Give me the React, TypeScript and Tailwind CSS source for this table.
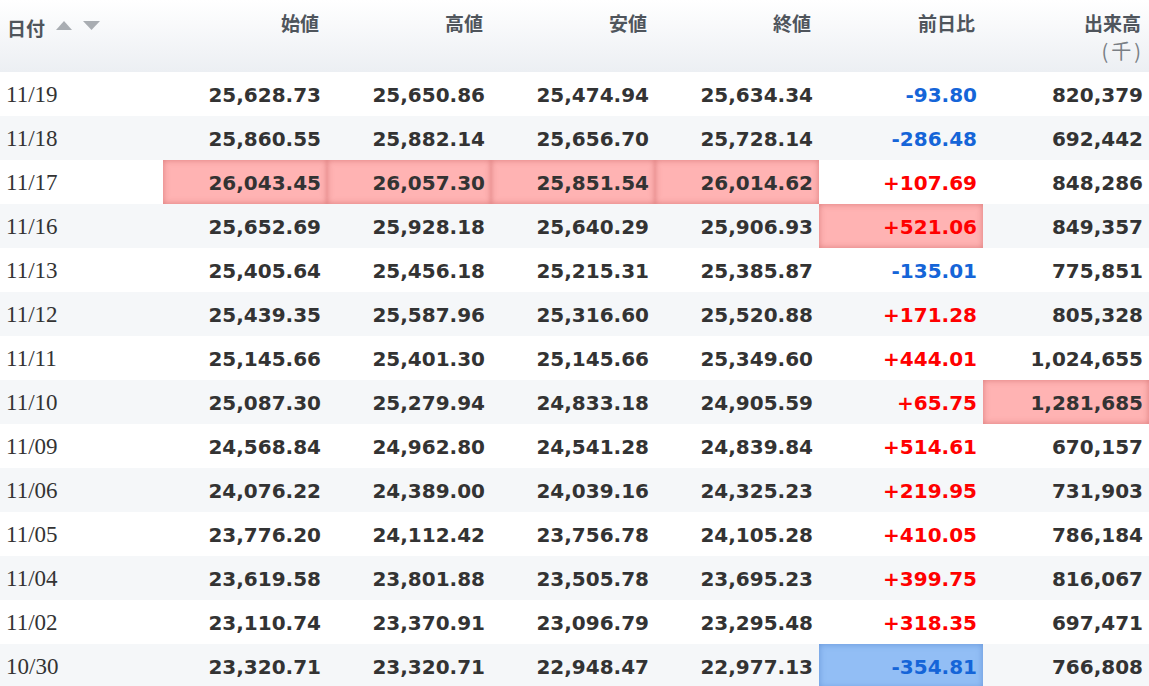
import React from "react";

type Mark = "up" | "down" | undefined;

interface Row {
  date: string;
  open: string;
  high: string;
  low: string;
  close: string;
  diff: string;
  vol: string;
  // which cells get the highlight tint
  hl?: { open?: Mark; high?: Mark; low?: Mark; close?: Mark; diff?: Mark; vol?: Mark };
}

const rows: Row[] = [
  { date: "11/19", open: "25,628.73", high: "25,650.86", low: "25,474.94", close: "25,634.34", diff: "-93.80", vol: "820,379" },
  { date: "11/18", open: "25,860.55", high: "25,882.14", low: "25,656.70", close: "25,728.14", diff: "-286.48", vol: "692,442" },
  {
    date: "11/17", open: "26,043.45", high: "26,057.30", low: "25,851.54", close: "26,014.62", diff: "+107.69", vol: "848,286",
    hl: { open: "up", high: "up", low: "up", close: "up" },
  },
  { date: "11/16", open: "25,652.69", high: "25,928.18", low: "25,640.29", close: "25,906.93", diff: "+521.06", vol: "849,357", hl: { diff: "up" } },
  { date: "11/13", open: "25,405.64", high: "25,456.18", low: "25,215.31", close: "25,385.87", diff: "-135.01", vol: "775,851" },
  { date: "11/12", open: "25,439.35", high: "25,587.96", low: "25,316.60", close: "25,520.88", diff: "+171.28", vol: "805,328" },
  { date: "11/11", open: "25,145.66", high: "25,401.30", low: "25,145.66", close: "25,349.60", diff: "+444.01", vol: "1,024,655" },
  { date: "11/10", open: "25,087.30", high: "25,279.94", low: "24,833.18", close: "24,905.59", diff: "+65.75", vol: "1,281,685", hl: { vol: "up" } },
  { date: "11/09", open: "24,568.84", high: "24,962.80", low: "24,541.28", close: "24,839.84", diff: "+514.61", vol: "670,157" },
  { date: "11/06", open: "24,076.22", high: "24,389.00", low: "24,039.16", close: "24,325.23", diff: "+219.95", vol: "731,903" },
  { date: "11/05", open: "23,776.20", high: "24,112.42", low: "23,756.78", close: "24,105.28", diff: "+410.05", vol: "786,184" },
  { date: "11/04", open: "23,619.58", high: "23,801.88", low: "23,505.78", close: "23,695.23", diff: "+399.75", vol: "816,067" },
  { date: "11/02", open: "23,110.74", high: "23,370.91", low: "23,096.79", close: "23,295.48", diff: "+318.35", vol: "697,471" },
  { date: "10/30", open: "23,320.71", high: "23,320.71", low: "22,948.47", close: "22,977.13", diff: "-354.81", vol: "766,808", hl: { diff: "down" } },
];

const numFont = { fontFamily: '"DejaVu Sans", Verdana, sans-serif' };

function tint(m: Mark) {
  if (m === "up") return "bg-[#ffb3b3] shadow-[inset_0_0_6px_rgba(190,80,80,0.55)]";
  if (m === "down") return "bg-[#92bef5] shadow-[inset_0_0_6px_rgba(60,110,190,0.5)]";
  return "";
}

const NumCell = ({ value, mark, color = "text-[#333]" }: { value: string; mark?: Mark; color?: string }) => (
  <td
    className={`h-[44px] p-0 pr-[6px] pt-[2px] text-right align-middle text-[20px] font-bold ${color} ${tint(mark)}`}
    style={numFont}
  >
    {value}
  </td>
);

const HeadCell = ({ label, sub }: { label: string; sub?: string }) => (
  <th className="p-0 pr-[8px] pt-[8px] text-right align-top font-bold">
    <div className="text-[19px] leading-[30px] text-[#4f555c]">{label}</div>
    {sub && <div className="mt-[1px] -mr-[3px] text-[20px] font-normal leading-[24px] tracking-[3px] text-[#7a7f85]">{sub}</div>}
  </th>
);

export default function App() {
  return (
    <div
      className="h-[686px] w-[1149px] overflow-hidden bg-white"
      style={{ fontFamily: '"Noto Sans CJK JP", "Noto Sans", sans-serif' }}
    >
      <table className="w-[1149px] table-fixed border-collapse">
        <colgroup>
          <col className="w-[163px]" />
          <col className="w-[164px]" />
          <col className="w-[164px]" />
          <col className="w-[164px]" />
          <col className="w-[164px]" />
          <col className="w-[164px]" />
          <col className="w-[166px]" />
        </colgroup>
        <thead>
          <tr className="h-[72px] bg-gradient-to-b from-white to-[#eceff3]">
            <th className="p-0 pl-[7px] pt-[13px] text-left align-top">
              <div className="flex items-center gap-[11px]">
                <span className="text-[19px] font-bold leading-[30px] text-[#4f555c]">日付</span>
                <svg width="45" height="10" viewBox="0 0 45 10" className="-mt-[4px]">
                  <polygon points="0,9 8,0 16,9" fill="#a9adb2" />
                  <polygon points="27,0 44,0 35.5,9" fill="#a9adb2" />
                </svg>
              </div>
            </th>
            <HeadCell label="始値" />
            <HeadCell label="高値" />
            <HeadCell label="安値" />
            <HeadCell label="終値" />
            <HeadCell label="前日比" />
            <HeadCell label="出来高" sub="(千)" />
          </tr>
        </thead>
        <tbody>
          {rows.map((r, i) => {
            const diffColor = r.diff.startsWith("-") ? "text-[#1565d8]" : "text-[#ff0000]";
            return (
              <tr key={r.date} className={i % 2 === 0 ? "bg-white" : "bg-[#f5f7f9]"}>
                <td
                  className="h-[44px] p-0 pl-[6px] align-middle text-[23px] leading-none text-[#333]"
                  style={{ fontFamily: '"Liberation Serif", "Times New Roman", serif' }}
                >
                  {r.date}
                </td>
                <NumCell value={r.open} mark={r.hl?.open} />
                <NumCell value={r.high} mark={r.hl?.high} />
                <NumCell value={r.low} mark={r.hl?.low} />
                <NumCell value={r.close} mark={r.hl?.close} />
                <NumCell value={r.diff} mark={r.hl?.diff} color={diffColor} />
                <NumCell value={r.vol} mark={r.hl?.vol} />
              </tr>
            );
          })}
        </tbody>
      </table>
    </div>
  );
}
